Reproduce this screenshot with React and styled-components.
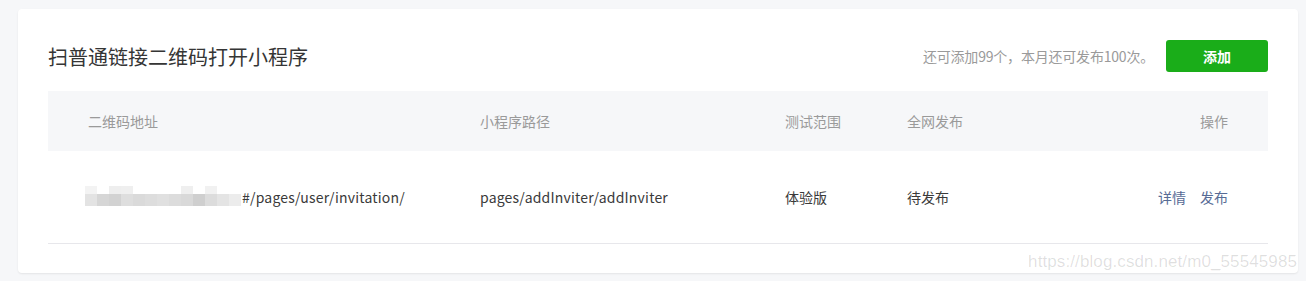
import styled, { createGlobalStyle } from 'styled-components';

const GlobalStyle = createGlobalStyle`
  body {
    margin: 0;
    background: #f6f7f9;
    font-family: "Noto Sans CJK SC", "Noto Sans", sans-serif;
  }
`

const Page = styled.div`
  padding: 9px 8px 8px 18px;
`

const Card = styled.div`
  position: relative;
  width: 1280px;
  box-sizing: border-box;
  padding: 31px 30px 29px;
  background: #fff;
  border-radius: 4px;
  box-shadow: 0 1px 2px rgba(0, 0, 0, 0.08);
`

const TopBar = styled.div`
  display: flex;
  align-items: center;
  height: 32px;
  margin-bottom: 19px;
`

const Title = styled.h2`
  flex: 1;
  margin: 0;
  font-size: 20px;
  font-weight: normal;
  color: #353535;
`

const Quota = styled.span`
  font-size: 14px;
  color: #9a9a9a;
  margin-right: 12px;
  letter-spacing: -0.2px;
`

const AddButton = styled.button`
  width: 102px;
  height: 32px;
  border: none;
  border-radius: 3px;
  background: #1aad19;
  color: #fff;
  font-family: inherit;
  font-size: 14px;
  font-weight: bold;
`

const Row = styled.div`
  display: grid;
  grid-template-columns: 392px 305px 122px 1fr auto;
  align-items: center;
  padding: 0 40px;
  height: ${({ head }) => (head ? '60px' : '92px')};
  background: ${({ head }) => (head ? '#f6f7f9' : '#fff')};
  border-bottom: ${({ head }) => (head ? 'none' : '1px solid #e7e7eb')};
  font-size: 14px;
  color: ${({ head }) => (head ? '#9a9a9a' : '#3a3a3a')};
`

const Cell = styled.div`
  display: flex;
  align-items: center;
  justify-content: ${({ right }) => (right ? 'flex-end' : 'flex-start')};
  gap: 14px;
  letter-spacing: ${({ latin }) => (latin ? '0.2px' : '0')};
`

const Url = styled.span`
  display: flex;
  align-items: center;
  margin-left: -3px;
`

const Action = styled.a`
  color: #576b95;
  text-decoration: none;
  cursor: pointer;
`

const Watermark = styled.span`
  position: absolute;
  right: 1px;
  bottom: 1px;
  font-family: "Liberation Sans", Arial, sans-serif;
  font-size: 17px;
  letter-spacing: 0.1px;
  color: rgba(0, 0, 0, 0.13);
  pointer-events: none;
`

const topRow = ['#f3f3f3', null, '#eeeeee', '#efefef', null, null, null, null, '#efefef', null, '#f1f1f1', null, null]
const bottomRow = ['#e3e3e3', '#d6d6d6', '#d2d2d2', '#dedede', '#dadada', '#dddddd', '#e0e0e0', '#dcdcdc', '#d9d9d9', '#cfcfcf', '#dcdcdc', '#e4e4e4', '#ececec']

const Mosaic = () => (
  <svg width="157" height="22" viewBox="0 0 157 22">
    {topRow.map((c, i) => c && <rect key={'t' + i} x={i * 12} y="0" width="12" height="8" fill={c} />)}
    {bottomRow.map((c, i) => <rect key={'b' + i} x={i * 12} y="8" width="12" height="12" fill={c} />)}
  </svg>
)

export default function App() {
  return (
    <Page>
      <GlobalStyle />
      <Card>
        <TopBar>
          <Title>扫普通链接二维码打开小程序</Title>
          <Quota>还可添加99个，本月还可发布100次。</Quota>
          <AddButton>添加</AddButton>
        </TopBar>
        <Row head>
          <Cell>二维码地址</Cell>
          <Cell>小程序路径</Cell>
          <Cell>测试范围</Cell>
          <Cell>全网发布</Cell>
          <Cell right>操作</Cell>
        </Row>
        <Row>
          <Cell latin>
            <Url><Mosaic />#/pages/user/invitation/</Url>
          </Cell>
          <Cell latin>pages/addInviter/addInviter</Cell>
          <Cell>体验版</Cell>
          <Cell>待发布</Cell>
          <Cell right>
            <Action>详情</Action>
            <Action>发布</Action>
          </Cell>
        </Row>
        <Watermark>https://blog.csdn.net/m0_55545985</Watermark>
      </Card>
    </Page>
  )
}
